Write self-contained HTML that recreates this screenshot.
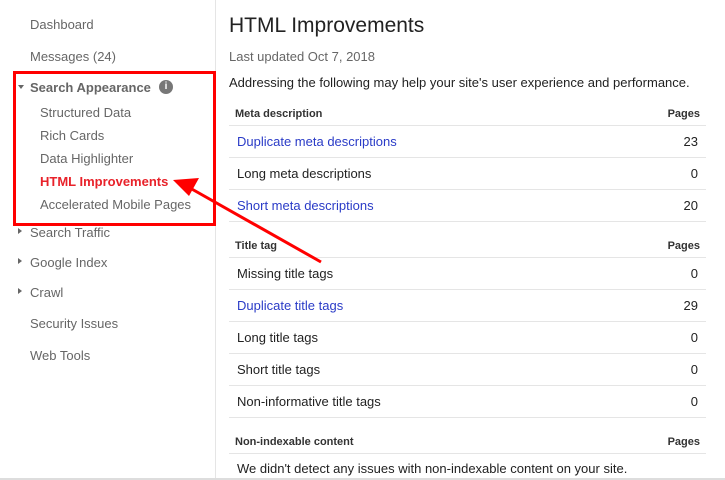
<html><head><style>
body{margin:0;width:725px;height:480px;overflow:hidden;background:#fff;font-family:"Liberation Sans",Arial,sans-serif;position:relative}
.a{position:absolute;white-space:nowrap}
.s{color:#666;font-size:13px}
.sub{color:#666;font-size:13px;left:40px}
.r{position:absolute;left:229px;width:477px;font-size:13px;color:#222}
.r span{position:absolute;left:8px}
.r b{position:absolute;right:8px;font-weight:normal}
.ln{position:absolute;left:229px;width:477px;height:1px;background:#e5e5e5}
.h{position:absolute;left:229px;width:477px;font-size:11px;font-weight:bold;color:#333}
.h span{position:absolute;left:6px}.h b{position:absolute;right:6px}
.bl{color:#2a3bc7}
.tri{position:absolute;left:18px;width:0;height:0}
</style></head><body>
<div style="position:absolute;left:215px;top:0;width:1px;height:480px;background:#e5e5e5"></div>
<div style="position:absolute;left:0;top:478px;width:725px;height:2px;background:#ddd"></div>
<div class="a s" style="left:30px;top:17px">Dashboard</div>
<div class="a s" style="left:30px;top:49px">Messages (24)</div>
<div class="tri" style="top:85px;border-left:3px solid transparent;border-right:3px solid transparent;border-top:4px solid #666"></div>
<div class="a" style="left:30px;top:80px;font-size:13px;font-weight:bold;color:#666">Search Appearance</div>
<div class="a" style="left:159px;top:80px;width:14px;height:14px;border-radius:50%;background:#777;color:#fff;font-size:10px;font-weight:bold;text-align:center;line-height:14px">i</div>
<div class="a sub" style="top:105px">Structured Data</div>
<div class="a sub" style="top:128px">Rich Cards</div>
<div class="a sub" style="top:151px">Data Highlighter</div>
<div class="a" style="left:40px;top:174px;font-size:13px;font-weight:bold;color:#e8222a">HTML Improvements</div>
<div class="a sub" style="top:197px">Accelerated Mobile Pages</div>
<div style="position:absolute;left:13px;top:71px;width:197px;height:149px;border:3px solid #f00"></div>
<div class="tri" style="top:228px;border-top:3px solid transparent;border-bottom:3px solid transparent;border-left:4px solid #666"></div>
<div class="a s" style="left:30px;top:225px">Search Traffic</div>
<div class="tri" style="top:258px;border-top:3px solid transparent;border-bottom:3px solid transparent;border-left:4px solid #666"></div>
<div class="a s" style="left:30px;top:255px">Google Index</div>
<div class="tri" style="top:288px;border-top:3px solid transparent;border-bottom:3px solid transparent;border-left:4px solid #666"></div>
<div class="a s" style="left:30px;top:285px">Crawl</div>
<div class="a s" style="left:30px;top:316px">Security Issues</div>
<div class="a s" style="left:30px;top:348px">Web Tools</div>

<div class="a" style="left:229px;top:14px;font-size:21px;color:#222">HTML Improvements</div>
<div class="a" style="left:229px;top:49px;font-size:13px;color:#666">Last updated Oct 7, 2018</div>
<div class="a" style="left:229px;top:75px;font-size:13px;color:#222">Addressing the following may help your site's user experience and performance.</div>

<div class="h" style="top:108px"><span>Meta description</span><b>Pages</b></div>
<div class="ln" style="top:125px"></div>
<div class="r" style="top:134px"><span class="bl">Duplicate meta descriptions</span><b>23</b></div>
<div class="ln" style="top:157px"></div>
<div class="r" style="top:166px"><span>Long meta descriptions</span><b>0</b></div>
<div class="ln" style="top:189px"></div>
<div class="r" style="top:198px"><span class="bl">Short meta descriptions</span><b>20</b></div>
<div class="ln" style="top:221px"></div>

<div class="h" style="top:240px"><span>Title tag</span><b>Pages</b></div>
<div class="ln" style="top:257px"></div>
<div class="r" style="top:266px"><span>Missing title tags</span><b>0</b></div>
<div class="ln" style="top:289px"></div>
<div class="r" style="top:298px"><span class="bl">Duplicate title tags</span><b>29</b></div>
<div class="ln" style="top:321px"></div>
<div class="r" style="top:330px"><span>Long title tags</span><b>0</b></div>
<div class="ln" style="top:353px"></div>
<div class="r" style="top:362px"><span>Short title tags</span><b>0</b></div>
<div class="ln" style="top:385px"></div>
<div class="r" style="top:394px"><span>Non-informative title tags</span><b>0</b></div>
<div class="ln" style="top:417px"></div>

<div class="h" style="top:436px"><span>Non-indexable content</span><b>Pages</b></div>
<div class="ln" style="top:453px"></div>
<div class="r" style="top:461px"><span>We didn't detect any issues with non-indexable content on your site.</span></div>

<svg style="position:absolute;left:0;top:0" width="725" height="480">
<line x1="321" y1="262" x2="190" y2="188" stroke="#f00" stroke-width="3"/>
<polygon points="173,180 199,178 189,196" fill="#f00"/>
</svg>
</body></html>
